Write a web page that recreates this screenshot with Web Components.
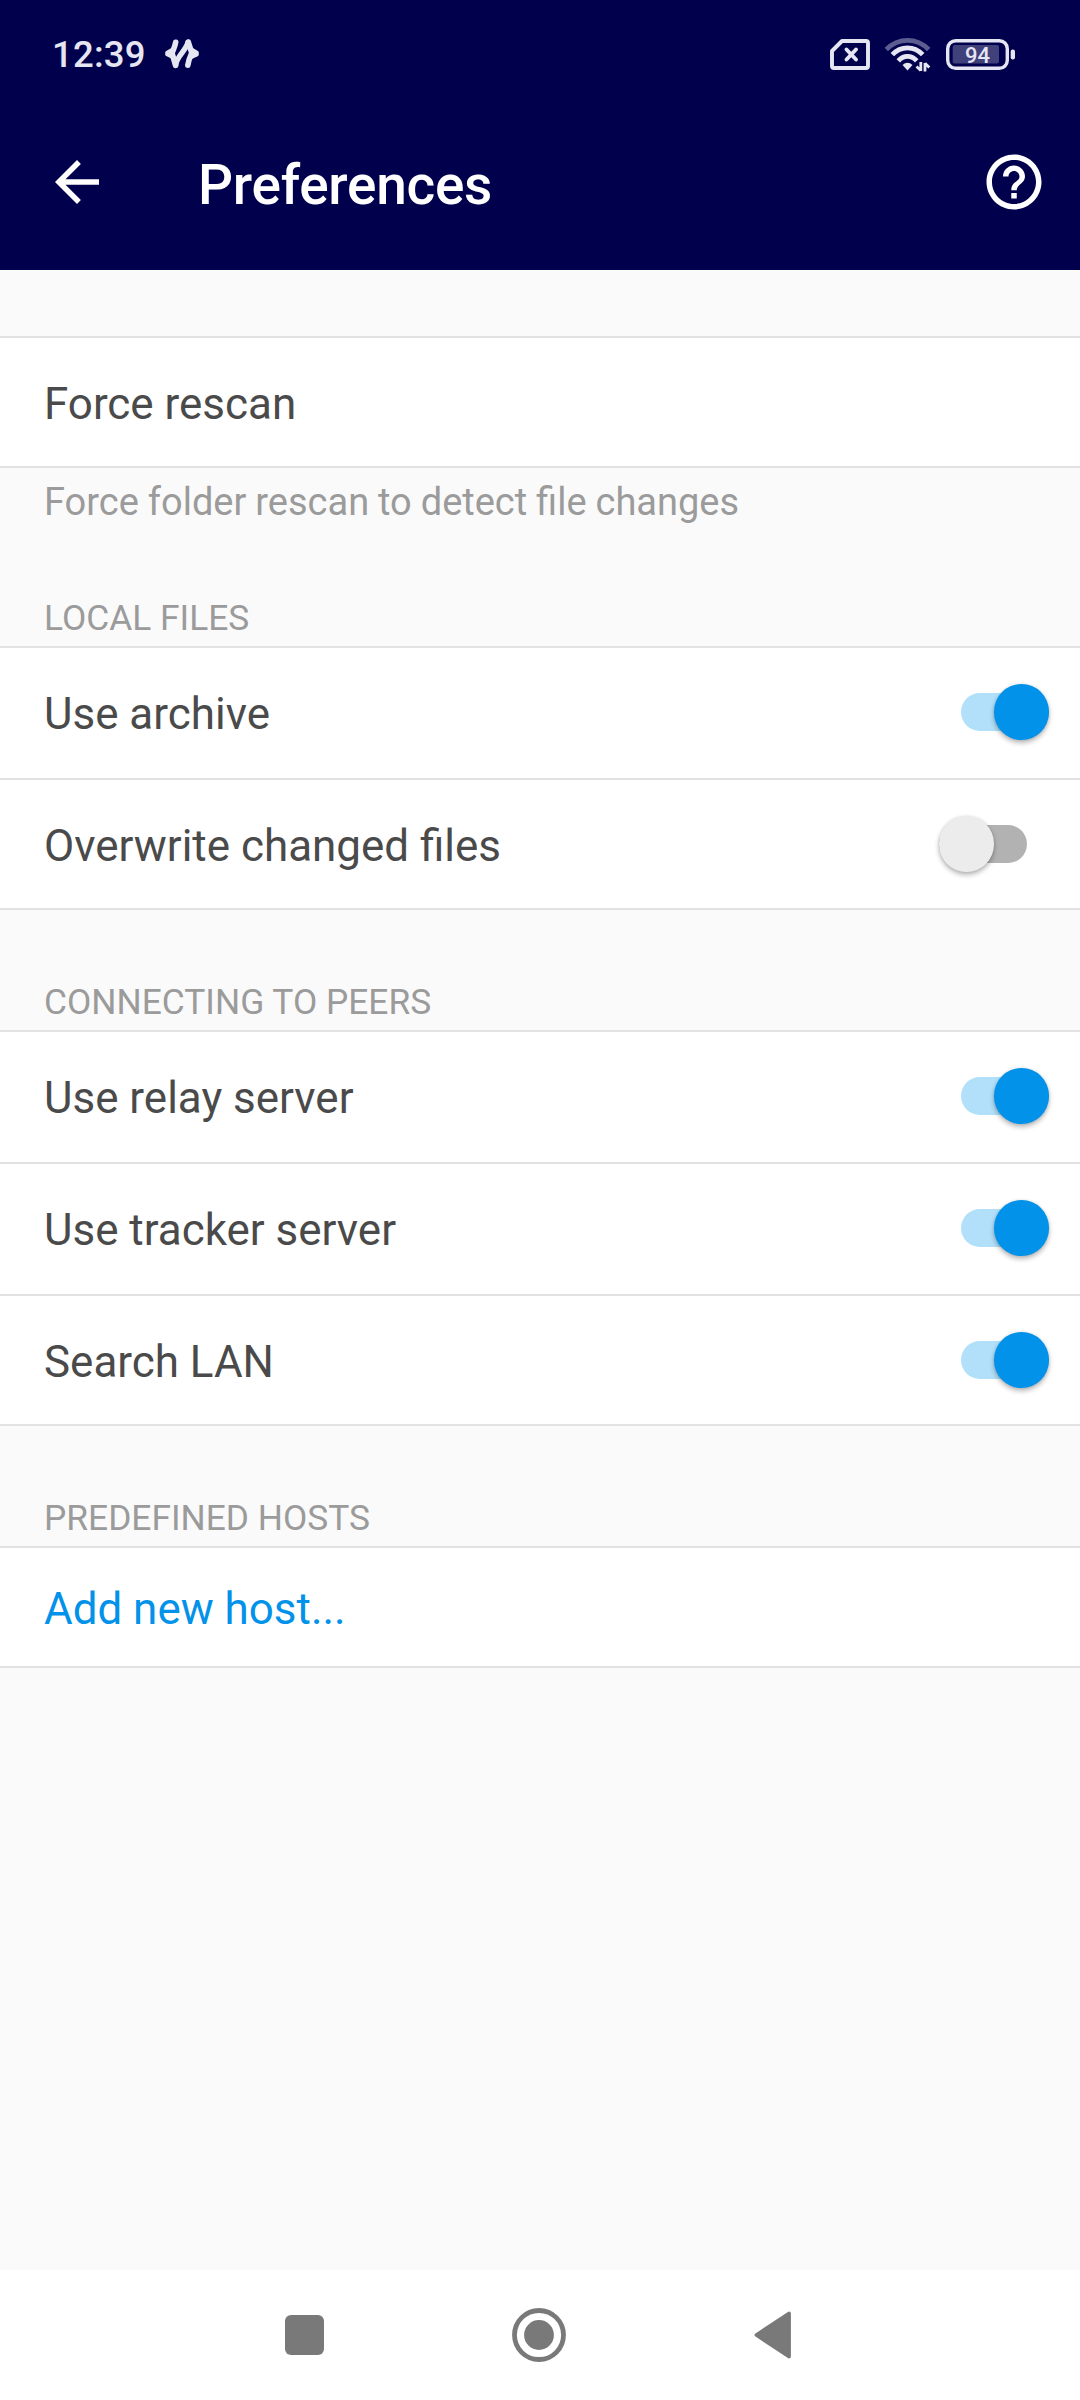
<!DOCTYPE html>
<html lang="en">
<head>
<meta charset="utf-8">
<title>Preferences</title>
<style>
html, body { margin: 0; padding: 0; background: #fafafa; }
body { font-family: Roboto, "Liberation Sans", sans-serif; color: #4a4a4a; }
</style>
</head>
<body>
<prefs-screen></prefs-screen>
<script>
const define = (name, html) => customElements.define(name, class extends HTMLElement {
  constructor() {
    super();
    const t = document.createElement('template');
    t.innerHTML = html;
    this.attachShadow({ mode: 'open' }).appendChild(t.content.cloneNode(true));
  }
});

define('status-bar', `
<style>
:host { display: flex; align-items: center; height: 108px; box-sizing: border-box; padding: 0 64px 0 52px; color: #e6e6f2; }
svg { display: block; flex: none; }
.clock { font-size: 36.5px; font-weight: 500; letter-spacing: .2px; line-height: 44px; padding-top: 2px; width: 113px; white-space: nowrap; }
.space { flex: 1; }
.icons { display: flex; align-items: center; gap: 14px; }
</style>
<span class="clock">12:39</span>
<svg width="34" height="30" viewBox="0 0 34 30" fill="none" stroke="#e6e6f2" stroke-linecap="round" stroke-linejoin="round">
  <path d="M10.700 3.200C10 8 8.500 10 7 14L10.500 26.300" stroke-width="5.600"/>
  <path d="M2 13.500L6.500 11L9 19L2 15.500Z" fill="#e6e6f2" stroke-width="3.600"/>
  <path d="M10.700 26.300C11.500 17 21 12 23 3.200" stroke-width="5.400"/>
  <path d="M23.300 3.200L26.800 14C25 18 23.500 21 22.800 26.300" stroke-width="5.600"/>
  <path d="M32 13.500L27 10.500L25.500 18.500L32 15.500Z" fill="#e6e6f2" stroke-width="3.600"/>
</svg>
<span class="space"></span>
<div class="icons">
  <svg width="40" height="31" viewBox="0 0 40 31" fill="none" stroke="#e6e6f2" stroke-width="3.900" stroke-linejoin="round" stroke-linecap="round">
    <path d="M12 2H36Q38 2 38 4V27Q38 29 36 29H4Q2 29 2 27V12Z"/>
    <path d="M16.500 10.500L26 20.500M26 10.500L16.500 20.500"/>
  </svg>
  <svg width="48" height="36" viewBox="0 0 48 36" fill="none" stroke="#e6e6f2" stroke-width="4.800">
    <path d="M2.300 13.500C14.500 1.300 32.500 1.300 44.700 13.500" stroke="#5c5c90"/>
    <path d="M8.300 18.700C17 9.700 30 9.700 38.700 18.700"/>
    <path d="M14.300 24.800C19.500 19 27.500 19 32.700 24.800"/>
    <path d="M18.500 29Q23.500 24.500 28.500 29L23.500 34.500Z" fill="#e6e6f2" stroke="none"/>
    <path d="M36.800 26V35M32.500 30.500L36.800 34.500M41 35.500V27M41 27.200L45.300 31.500" stroke-width="2.800"/>
  </svg>
  <svg width="70" height="31" viewBox="0 0 70 31">
    <rect x="1.700" y="1.700" width="59.600" height="27.600" rx="8" fill="none" stroke="#e6e6f2" stroke-width="3.400"/>
    <rect x="6.700" y="6" width="46.300" height="18.500" rx="2" fill="#40407a"/>
    <rect x="64.700" y="10.500" width="4.300" height="10" rx="2" fill="#e6e6f2"/>
    <text x="31.500" y="24" text-anchor="middle" font-family="Roboto" font-weight="500" font-size="22" fill="#e6e6f2">94</text>
  </svg>
</div>`);

define('app-toolbar', `
<style>
:host { display: flex; align-items: center; height: 162px; box-sizing: border-box; padding: 0 33px 14px 44px; color: #fff; }
svg { display: block; flex: none; width: 66px; height: 66px; fill: #fff; }
h1 { flex: 1; margin: 0 0 0 88px; padding-top: 6px; font-size: 55px; font-weight: 500; letter-spacing: -.28px; line-height: 66px; }
</style>
<svg viewBox="0 0 24 24"><path d="M20 11H7.830l5.590-5.590L12 4l-8 8 8 8 1.410-1.410L7.830 13H20v-2z"/></svg>
<h1><slot></slot></h1>
<svg viewBox="0 0 24 24"><path d="M11 18h2v-2h-2v2zm1-16C6.480 2 2 6.480 2 12s4.480 10 10 10 10-4.480 10-10S17.520 2 12 2zm0 18c-4.410 0-8-3.590-8-8s3.590-8 8-8 8 3.590 8 8-3.590 8-8 8zm0-14c-2.210 0-4 1.790-4 4h2c0-1.100.900-2 2-2s2 .900 2 2c0 2-3 1.750-3 5h2c0-2.250 3-2.500 3-5 0-2.210-1.790-4-4-4z"/></svg>`);

define('toggle-switch', `
<style>
:host { display: flex; align-items: center; width: 88px; height: 38px; border-radius: 19px; background: #b2b2b2; margin-right: 22px; }
i { display: block; flex: none; width: 55.200px; height: 55.200px; border-radius: 50%; background: #ececec; box-shadow: 0 3px 5px rgba(0,0,0,.28), 0 0 3px rgba(0,0,0,.1); }
:host([on]) { background: #b2dffa; margin-right: 0; justify-content: flex-end; }
:host([on]) i { background: #0292e9; }
</style><i></i>`);

define('pref-row', `
<style>
:host { display: flex; align-items: center; height: 128px; box-sizing: border-box; padding: 0 31px 0 44px; background: #fff; }
:host(:not(:last-child)) { height: 132px; padding-bottom: 2px; border-bottom: 2px solid #e2e2e2; }
:host([link]) { height: 118px; color: #0292e9; }
span { flex: 1; font-size: 43.950px; line-height: 52px; padding-top: 4px; }
</style>
<span><slot></slot></span><slot name="control"></slot>`);

define('pref-group', `
<style>
:host { display: block; }
.head { display: flex; align-items: flex-end; height: 120px; box-sizing: border-box; padding: 0 44px 7px; font-size: 35.350px; line-height: 42px; color: #9b9b9b; text-transform: uppercase; }
:host([plain]) .head { height: 66px; }
:host([after-note]) .head { height: 121px; }
.rows { border-top: 2px solid #e2e2e2; border-bottom: 2px solid #e2e2e2; }
</style>
<div class="head"><slot name="title"></slot></div>
<div class="rows"><slot></slot></div>`);

define('pref-note', `
<style>
:host { display: block; padding: 11px 44px 0; font-size: 38px; word-spacing: -.500px; line-height: 46px; color: #9b9b9b; }
</style><slot></slot>`);

define('nav-bar', `
<style>
:host { display: flex; align-items: center; justify-content: space-between; height: 130px; box-sizing: border-box; padding: 0 288px 0 284px; background: #fff; }
svg { display: block; fill: #797979; }
</style>
<svg width="40" height="54" viewBox="0 0 40 54"><rect x="1" y="7" width="39" height="40" rx="6"/></svg>
<svg width="54" height="54" viewBox="0 0 54 54"><circle cx="27" cy="27" r="24.500" fill="none" stroke="#797979" stroke-width="4.800"/><circle cx="27" cy="27" r="14.900"/></svg>
<svg width="38" height="54" viewBox="0 0 38 54"><path d="M2.500 27L35 5.500V48.500Z" stroke="#797979" stroke-width="3.800" stroke-linejoin="round"/></svg>`);

define('prefs-screen', `
<style>
:host { display: flex; flex-direction: column; height: 2400px; background: #fafafa; }
header { background: #00004c; }
main { flex: 1; }
</style>
<header><status-bar></status-bar><app-toolbar>Preferences</app-toolbar></header>
<main>
  <pref-group plain><pref-row>Force rescan</pref-row></pref-group>
  <pref-note>Force folder rescan to detect file changes</pref-note>
  <pref-group after-note><span slot="title">Local files</span>
    <pref-row>Use archive<toggle-switch slot="control" on></toggle-switch></pref-row>
    <pref-row>Overwrite changed files<toggle-switch slot="control"></toggle-switch></pref-row>
  </pref-group>
  <pref-group><span slot="title">Connecting to peers</span>
    <pref-row>Use relay server<toggle-switch slot="control" on></toggle-switch></pref-row>
    <pref-row>Use tracker server<toggle-switch slot="control" on></toggle-switch></pref-row>
    <pref-row>Search LAN<toggle-switch slot="control" on></toggle-switch></pref-row>
  </pref-group>
  <pref-group><span slot="title">Predefined hosts</span>
    <pref-row link>Add new host...</pref-row>
  </pref-group>
</main>
<nav-bar></nav-bar>`);
</script>
</body>
</html>
